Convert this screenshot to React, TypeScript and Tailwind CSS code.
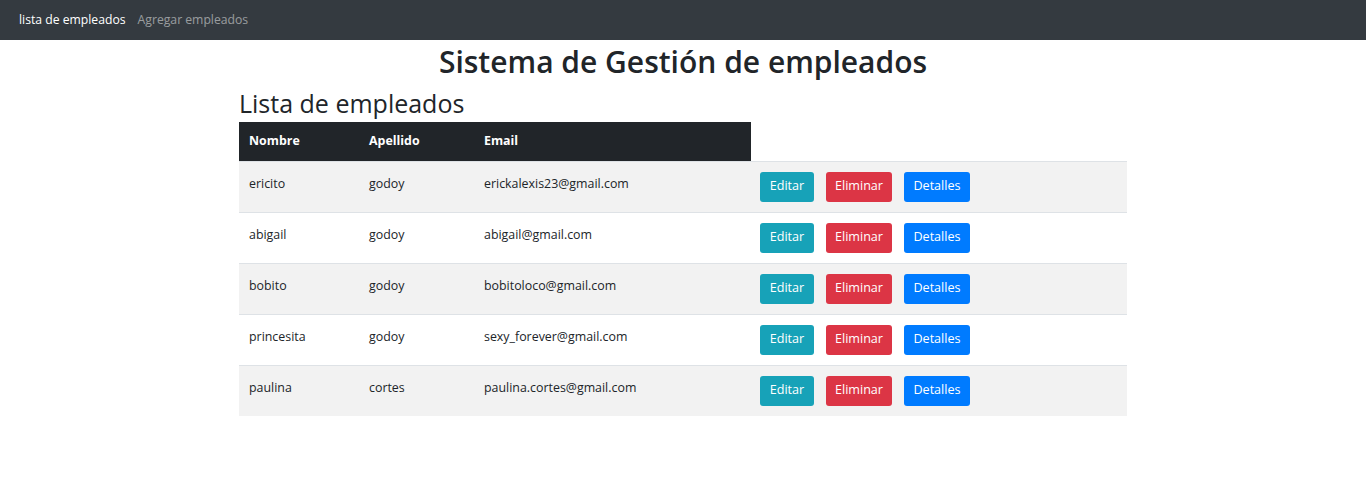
import React from 'react';

interface Empleado {
  nombre: string;
  apellido: string;
  email: string;
}

const EMPLEADOS: Empleado[] = [
  { nombre: 'ericito', apellido: 'godoy', email: 'erickalexis23@gmail.com' },
  { nombre: 'abigail', apellido: 'godoy', email: 'abigail@gmail.com' },
  { nombre: 'bobito', apellido: 'godoy', email: 'bobitoloco@gmail.com' },
  { nombre: 'princesita', apellido: 'godoy', email: 'sexy_forever@gmail.com' },
  { nombre: 'paulina', apellido: 'cortes', email: 'paulina.cortes@gmail.com' },
];

const App: React.FC = () => {
  return (
    <div className="min-h-screen bg-white text-[#212529] font-['Open_Sans',sans-serif]">
      <nav className="h-10 bg-[#343a40] flex items-center px-[19px] gap-3 text-[12.2px]">
        <a href="#" className="text-white">lista de empleados</a>
        <a href="#" className="text-white/50">Agregar empleados</a>
      </nav>

      <h1 className="text-center text-[30px] font-semibold leading-[42px] mt-[1px]">
        Sistema de Gestión de empleados
      </h1>

      <div className="w-[888px] mx-auto">
        <h2 className="text-[25px] font-medium leading-[36px] mt-[2px] mb-[1px]">Lista de empleados</h2>
        <table className="w-full border-collapse text-[12.4px]">
          <thead>
            <tr>
              <th className="w-[120px] h-[39px] bg-[#212529] text-white text-left font-bold px-[10px]">Nombre</th>
              <th className="w-[115px] bg-[#212529] text-white text-left font-bold px-[10px]">Apellido</th>
              <th className="w-[277px] bg-[#212529] text-white text-left font-bold px-[10px]">Email</th>
              <th></th>
            </tr>
          </thead>
          <tbody>
            {EMPLEADOS.map((e, i) => (
              <tr key={e.email} className={`border-t border-[#dee2e6] ${i % 2 === 0 ? 'bg-[#f2f2f2]' : 'bg-white'}`}>
                <td className="align-top px-[10px] pt-[13px] h-[51px]">{e.nombre}</td>
                <td className="align-top px-[10px] pt-[13px]">{e.apellido}</td>
                <td className="align-top px-[10px] pt-[13px]">{e.email}</td>
                <td className="align-top px-[9px] pt-[10px]">
                  <div className="flex gap-3 text-[12.6px]">
                    <button className="h-[30px] w-[54px] rounded-[3px] bg-[#17a2b8] text-white">Editar</button>
                    <button className="h-[30px] w-[66px] rounded-[3px] bg-[#dc3545] text-white">Eliminar</button>
                    <button className="h-[30px] w-[66px] rounded-[3px] bg-[#007bff] text-white">Detalles</button>
                  </div>
                </td>
              </tr>
            ))}
          </tbody>
        </table>
      </div>
    </div>
  );
};

export default App;
